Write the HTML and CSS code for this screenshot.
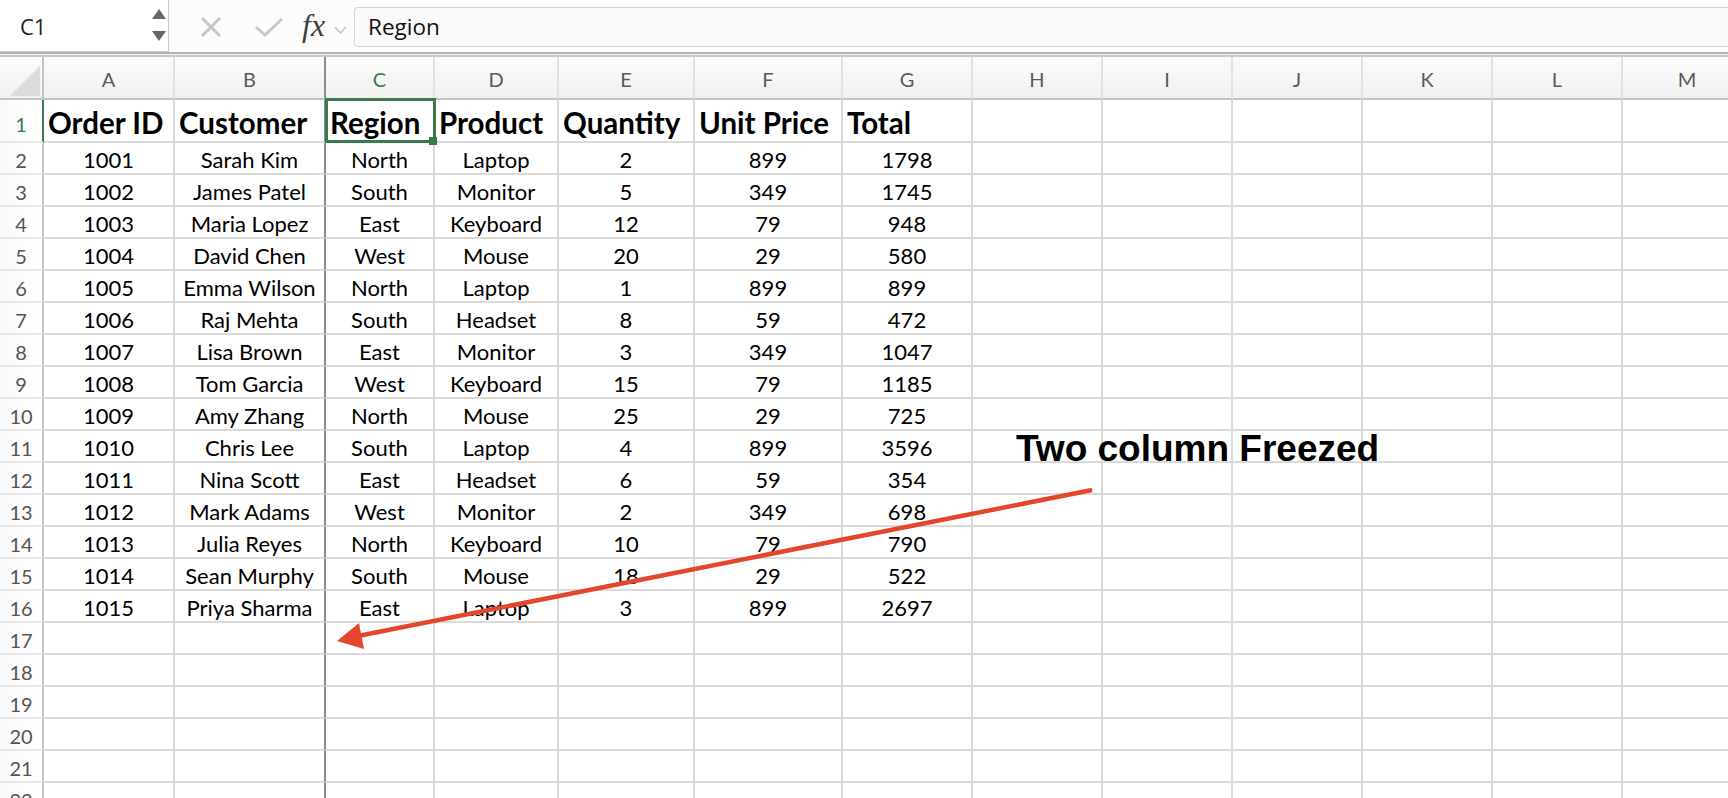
FILE: index.html
```html
<!DOCTYPE html>
<html>
<head>
<meta charset="utf-8">
<title>Sheet</title>
<link rel="stylesheet" href="styles.css">
</head>
<body>
<div class="toolbar">
  <div class="namebox">
    <span>C1</span>
    <svg class="spin" width="16" height="34" viewBox="0 0 16 34"><polygon points="1,11 15,11 8,1" fill="#666"/><polygon points="1,23 15,23 8,33" fill="#666"/></svg>
  </div>
  <svg class="ico-x" width="22" height="20" viewBox="0 0 22 20"><path d="M2 1 L20 19 M20 1 L2 19" stroke="#c6c6c6" stroke-width="3" fill="none"/></svg>
  <svg class="ico-ok" width="28" height="20" viewBox="0 0 28 20"><path d="M1 10 L10 18 L27 2" stroke="#c6c6c6" stroke-width="3" fill="none"/></svg>
  <span class="fx">fx</span>
  <svg class="ico-chev" width="13" height="8" viewBox="0 0 13 8"><path d="M1 1 L6.5 7 L12 1" stroke="#c4c4c4" stroke-width="1.5" fill="none"/></svg>
  <div class="formula">Region</div>
</div>
<div class="sep"></div>
<div class="sheet">
  <div class="r hd">
    <div class="c corner"><svg width="44" height="41" viewBox="0 0 44 41"><polygon points="10,39 40,39 40,9" fill="#dcdcdc"/></svg></div>
    <div class="c">A</div><div class="c">B</div><div class="c on">C</div><div class="c">D</div><div class="c">E</div><div class="c">F</div><div class="c">G</div><div class="c">H</div><div class="c">I</div><div class="c">J</div><div class="c">K</div><div class="c">L</div><div class="c">M</div>
  </div>
  <div class="r r1">
    <div class="c rh">1</div>
    <div class="c">Order ID</div><div class="c">Customer</div><div class="c sel">Region</div><div class="c">Product</div><div class="c">Quantity</div><div class="c">Unit Price</div><div class="c">Total</div><div class="c"></div><div class="c"></div><div class="c"></div><div class="c"></div><div class="c"></div><div class="c"></div>
  </div>
  <div class="r"><div class="c rh">2</div><div class="c">1001</div><div class="c">Sarah Kim</div><div class="c">North</div><div class="c">Laptop</div><div class="c">2</div><div class="c">899</div><div class="c">1798</div><div class="c"></div><div class="c"></div><div class="c"></div><div class="c"></div><div class="c"></div><div class="c"></div></div>
  <div class="r"><div class="c rh">3</div><div class="c">1002</div><div class="c">James Patel</div><div class="c">South</div><div class="c">Monitor</div><div class="c">5</div><div class="c">349</div><div class="c">1745</div><div class="c"></div><div class="c"></div><div class="c"></div><div class="c"></div><div class="c"></div><div class="c"></div></div>
  <div class="r"><div class="c rh">4</div><div class="c">1003</div><div class="c">Maria Lopez</div><div class="c">East</div><div class="c">Keyboard</div><div class="c">12</div><div class="c">79</div><div class="c">948</div><div class="c"></div><div class="c"></div><div class="c"></div><div class="c"></div><div class="c"></div><div class="c"></div></div>
  <div class="r"><div class="c rh">5</div><div class="c">1004</div><div class="c">David Chen</div><div class="c">West</div><div class="c">Mouse</div><div class="c">20</div><div class="c">29</div><div class="c">580</div><div class="c"></div><div class="c"></div><div class="c"></div><div class="c"></div><div class="c"></div><div class="c"></div></div>
  <div class="r"><div class="c rh">6</div><div class="c">1005</div><div class="c">Emma Wilson</div><div class="c">North</div><div class="c">Laptop</div><div class="c">1</div><div class="c">899</div><div class="c">899</div><div class="c"></div><div class="c"></div><div class="c"></div><div class="c"></div><div class="c"></div><div class="c"></div></div>
  <div class="r"><div class="c rh">7</div><div class="c">1006</div><div class="c">Raj Mehta</div><div class="c">South</div><div class="c">Headset</div><div class="c">8</div><div class="c">59</div><div class="c">472</div><div class="c"></div><div class="c"></div><div class="c"></div><div class="c"></div><div class="c"></div><div class="c"></div></div>
  <div class="r"><div class="c rh">8</div><div class="c">1007</div><div class="c">Lisa Brown</div><div class="c">East</div><div class="c">Monitor</div><div class="c">3</div><div class="c">349</div><div class="c">1047</div><div class="c"></div><div class="c"></div><div class="c"></div><div class="c"></div><div class="c"></div><div class="c"></div></div>
  <div class="r"><div class="c rh">9</div><div class="c">1008</div><div class="c">Tom Garcia</div><div class="c">West</div><div class="c">Keyboard</div><div class="c">15</div><div class="c">79</div><div class="c">1185</div><div class="c"></div><div class="c"></div><div class="c"></div><div class="c"></div><div class="c"></div><div class="c"></div></div>
  <div class="r"><div class="c rh">10</div><div class="c">1009</div><div class="c">Amy Zhang</div><div class="c">North</div><div class="c">Mouse</div><div class="c">25</div><div class="c">29</div><div class="c">725</div><div class="c"></div><div class="c"></div><div class="c"></div><div class="c"></div><div class="c"></div><div class="c"></div></div>
  <div class="r"><div class="c rh">11</div><div class="c">1010</div><div class="c">Chris Lee</div><div class="c">South</div><div class="c">Laptop</div><div class="c">4</div><div class="c">899</div><div class="c">3596</div><div class="c"></div><div class="c"></div><div class="c"></div><div class="c"></div><div class="c"></div><div class="c"></div></div>
  <div class="r"><div class="c rh">12</div><div class="c">1011</div><div class="c">Nina Scott</div><div class="c">East</div><div class="c">Headset</div><div class="c">6</div><div class="c">59</div><div class="c">354</div><div class="c"></div><div class="c"></div><div class="c"></div><div class="c"></div><div class="c"></div><div class="c"></div></div>
  <div class="r"><div class="c rh">13</div><div class="c">1012</div><div class="c">Mark Adams</div><div class="c">West</div><div class="c">Monitor</div><div class="c">2</div><div class="c">349</div><div class="c">698</div><div class="c"></div><div class="c"></div><div class="c"></div><div class="c"></div><div class="c"></div><div class="c"></div></div>
  <div class="r"><div class="c rh">14</div><div class="c">1013</div><div class="c">Julia Reyes</div><div class="c">North</div><div class="c">Keyboard</div><div class="c">10</div><div class="c">79</div><div class="c">790</div><div class="c"></div><div class="c"></div><div class="c"></div><div class="c"></div><div class="c"></div><div class="c"></div></div>
  <div class="r"><div class="c rh">15</div><div class="c">1014</div><div class="c">Sean Murphy</div><div class="c">South</div><div class="c">Mouse</div><div class="c">18</div><div class="c">29</div><div class="c">522</div><div class="c"></div><div class="c"></div><div class="c"></div><div class="c"></div><div class="c"></div><div class="c"></div></div>
  <div class="r"><div class="c rh">16</div><div class="c">1015</div><div class="c">Priya Sharma</div><div class="c">East</div><div class="c">Laptop</div><div class="c">3</div><div class="c">899</div><div class="c">2697</div><div class="c"></div><div class="c"></div><div class="c"></div><div class="c"></div><div class="c"></div><div class="c"></div></div>
  <div class="r"><div class="c rh">17</div><div class="c"></div><div class="c"></div><div class="c"></div><div class="c"></div><div class="c"></div><div class="c"></div><div class="c"></div><div class="c"></div><div class="c"></div><div class="c"></div><div class="c"></div><div class="c"></div><div class="c"></div></div>
  <div class="r"><div class="c rh">18</div><div class="c"></div><div class="c"></div><div class="c"></div><div class="c"></div><div class="c"></div><div class="c"></div><div class="c"></div><div class="c"></div><div class="c"></div><div class="c"></div><div class="c"></div><div class="c"></div><div class="c"></div></div>
  <div class="r"><div class="c rh">19</div><div class="c"></div><div class="c"></div><div class="c"></div><div class="c"></div><div class="c"></div><div class="c"></div><div class="c"></div><div class="c"></div><div class="c"></div><div class="c"></div><div class="c"></div><div class="c"></div><div class="c"></div></div>
  <div class="r"><div class="c rh">20</div><div class="c"></div><div class="c"></div><div class="c"></div><div class="c"></div><div class="c"></div><div class="c"></div><div class="c"></div><div class="c"></div><div class="c"></div><div class="c"></div><div class="c"></div><div class="c"></div><div class="c"></div></div>
  <div class="r"><div class="c rh">21</div><div class="c"></div><div class="c"></div><div class="c"></div><div class="c"></div><div class="c"></div><div class="c"></div><div class="c"></div><div class="c"></div><div class="c"></div><div class="c"></div><div class="c"></div><div class="c"></div><div class="c"></div></div>
  <div class="r"><div class="c rh">22</div><div class="c"></div><div class="c"></div><div class="c"></div><div class="c"></div><div class="c"></div><div class="c"></div><div class="c"></div><div class="c"></div><div class="c"></div><div class="c"></div><div class="c"></div><div class="c"></div><div class="c"></div></div>
</div>
<div class="note">Two column Freezed</div>
<svg class="arrow" width="1728" height="798" viewBox="0 0 1728 798">
  <line x1="1092" y1="490" x2="358" y2="636" stroke="#e3462c" stroke-width="4.5"/>
  <polygon points="337,641 359,623 364,649" fill="#e3462c"/>
</svg>
</body>
</html>
```

FILE: styles.css
```css
html, body {
  margin: 0;
  padding: 0;
}
body {
  width: 1728px;
  height: 798px;
  overflow: hidden;
  position: relative;
  background: #ffffff;
  font-family: Lato, "Noto Sans", sans-serif;
  color: #000;
}

/* toolbar / formula bar */
.toolbar {
  display: flex;
  align-items: center;
  height: 52px;
  background: #fcfcfc;
}
.namebox {
  box-sizing: border-box;
  flex: none;
  width: 169px;
  height: 52px;
  align-self: flex-start;
  display: flex;
  align-items: center;
  justify-content: space-between;
  padding-left: 20px;
  padding-right: 1px;
  background: #ffffff;
  border-right: 1px solid #cbcbcb;
  border-bottom: 1px solid #cbcbcb;
  font-family: "Open Sans", "Liberation Sans", sans-serif;
  font-size: 22px;
  color: #1e1e1e;
}
.spin {
  margin-top: -2px;
}
.ico-x {
  flex: none;
  margin-left: 31px;
  margin-top: 2px;
}
.ico-ok {
  flex: none;
  margin-left: 33px;
  margin-top: 2px;
}
.fx {
  flex: none;
  margin-left: 19px;
  font-family: "Liberation Serif", serif;
  font-style: italic;
  font-size: 32px;
  line-height: 30px;
  color: #404040;
  margin-top: -2px;
}
.ico-chev {
  flex: none;
  margin-left: 9px;
  margin-top: 7px;
}
.formula {
  flex: 1;
  box-sizing: border-box;
  height: 40px;
  margin-left: 7px;
  margin-top: 2px;
  padding-left: 13px;
  background: #fafafa;
  border: 1px solid #d6d6d6;
  border-right: none;
  border-radius: 4px 0 0 4px;
  font-family: "Open Sans", "Liberation Sans", sans-serif;
  font-size: 22.5px;
  line-height: 37px;
  color: #111;
}

.sep {
  box-sizing: border-box;
  height: 5px;
  border-top: 2px solid #b3b3b3;
  border-bottom: 2px solid #c8c8c8;
  background: #f0f0f0;
}

/* sheet grid */
.sheet {
  overflow: hidden;
}
.r {
  display: flex;
  height: 32px;
}
.c {
  flex: none;
  box-sizing: border-box;
  width: 130px;
  height: 100%;
  border-right: 2px solid #dadada;
  border-bottom: 2px solid #dadada;
  text-align: center;
  white-space: nowrap;
  font-size: 22px;
  padding-top: 3px;
  line-height: 27px;
}
.r > .c:nth-child(1) { width: 44px; }
.r > .c:nth-child(2) { width: 131px; }
.r > .c:nth-child(3) { width: 151px; border-right-color: #8c8c8c; }
.r > .c:nth-child(4) { width: 109px; }
.r > .c:nth-child(5) { width: 124px; }
.r > .c:nth-child(6) { width: 136px; }
.r > .c:nth-child(7) { width: 148px; }

/* column headers */
.hd {
  height: 43px;
}
.hd .c {
  background: linear-gradient(#fbfbfb, #f1f1f1);
  border-right-color: #e2e2e2;
  border-bottom-color: #c4c4c4;
  color: #5a5a5a;
  font-size: 20px;
  padding-top: 4px;
  line-height: 37px;
}
.hd .corner {
  padding: 0;
  border-right-color: #c4c4c4;
}
.hd .corner svg {
  display: block;
}
.hd .on {
  color: #3a7a4c;
}

/* row headers */
.rh {
  background: linear-gradient(90deg, #f9f9f9, #ffffff);
  border-right-color: #c4c4c4 !important;
  border-bottom-color: #e6e6e6 !important;
  color: #555555;
  font-size: 20px;
  padding-top: 4px;
  line-height: 26px;
}

/* header row 1 */
.r1 {
  height: 43px;
}
.r1 .c {
  text-align: left;
  font-weight: 700;
  font-size: 29.5px;
  padding-left: 4px;
  padding-top: 5px;
  line-height: 36px;
}
.r1 .rh {
  text-align: center;
  font-weight: 400;
  font-size: 20px;
  padding-left: 0;
  padding-top: 8px;
  line-height: 33px;
  color: #3a7a4c;
  border-right-color: #3a7a4c !important;
}

/* active cell */
.sel {
  position: relative;
  z-index: 2;
}
.sel::before {
  content: "";
  position: absolute;
  left: -1px;
  top: -2px;
  right: -3px;
  bottom: -2px;
  border: 3px solid #3a7a4c;
}
.sel::after {
  content: "";
  position: absolute;
  width: 8px;
  height: 8px;
  right: -4px;
  bottom: -4px;
  background: #3a7a4c;
}

/* annotation overlay */
.note {
  position: absolute;
  left: 1016px;
  top: 431px;
  font-family: "Liberation Sans", Arial, sans-serif;
  font-weight: 700;
  font-size: 37px;
  line-height: 36px;
  color: #000;
  white-space: nowrap;
  z-index: 3;
}
.arrow {
  position: absolute;
  left: 0;
  top: 0;
  pointer-events: none;
  z-index: 4;
}
```
